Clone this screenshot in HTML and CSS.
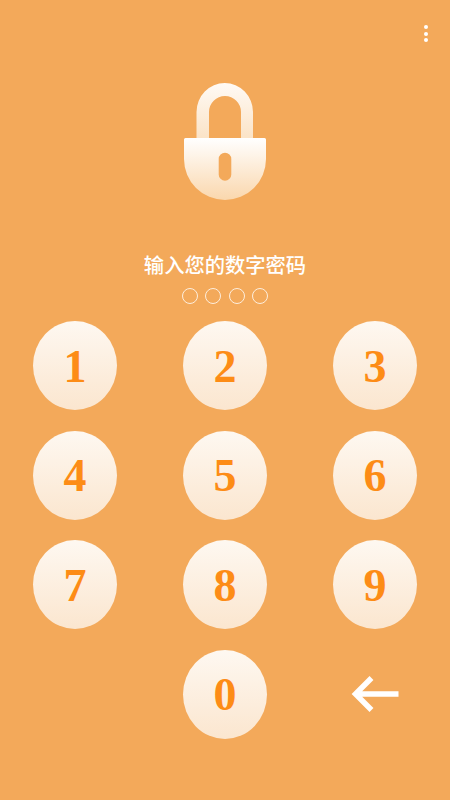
FILE: index.html
```html
<!DOCTYPE html>
<html lang="zh-CN">
  <head>
    <meta charset="UTF-8" />
    <meta name="viewport" content="width=device-width, initial-scale=1.0" />
    <title>输入您的数字密码</title>
    <link rel="stylesheet" href="styles.css">
  </head>
  <body>
    <div class="screen">
      <div class="top-bar">
        <div class="menu">
          <span class="menu-dot"></span>
          <span class="menu-dot"></span>
          <span class="menu-dot"></span>
        </div>
      </div>

      <svg class="lock" width="82" height="118" viewBox="0 0 82 118">
        <defs>
          <linearGradient id="shackleFill" x1="0" y1="0" x2="0" y2="1">
            <stop offset="0" stop-color="#fffaf5" />
            <stop offset="1" stop-color="#fbe3c6" />
          </linearGradient>
          <linearGradient id="bodyFill" x1="0" y1="0" x2="0" y2="1">
            <stop offset="0" stop-color="#ffffff" />
            <stop offset="1" stop-color="#fad7ad" />
          </linearGradient>
        </defs>
        <path d="M12.500 56V29a28.250 29 0 0 1 56.500 0V56H57V29a16 16 0 0 0-32 0V56Z" fill="url(#shackleFill)" />
        <path fill-rule="evenodd" d="M1.500 55H80.500a1.500 1.500 0 0 1 1.500 1.500V76a41 41 0 0 1-82 0V56.500A1.500 1.500 0 0 1 1.500 55ZM41 69.700a6.300 6.300 0 0 0-6.300 6.300V91.400a6.300 6.300 0 0 0 12.600 0V76a6.300 6.300 0 0 0-6.300-6.300Z" fill="url(#bodyFill)" />
      </svg>

      <h1 class="title">输入您的数字密码</h1>

      <div class="pin-dots">
        <span class="pin-dot"></span>
        <span class="pin-dot"></span>
        <span class="pin-dot"></span>
        <span class="pin-dot"></span>
      </div>

      <div class="keypad">
        <button class="key">1</button>
        <button class="key">2</button>
        <button class="key">3</button>
        <button class="key">4</button>
        <button class="key">5</button>
        <button class="key">6</button>
        <button class="key">7</button>
        <button class="key">8</button>
        <button class="key">9</button>
        <span></span>
        <button class="key">0</button>
        <button class="back">
          <svg width="50" height="38" viewBox="0 0 50 38">
            <path d="M48.500 19H5.500M21.500 3 5.500 19 21.500 35" fill="none" stroke="#ffffff" stroke-width="5.500" />
          </svg>
        </button>
      </div>
    </div>
  </body>
</html>
```

FILE: styles.css
```css
* {
  box-sizing: border-box;
  margin: 0;
  padding: 0;
}

body {
  width: 450px;
  height: 800px;
  overflow: hidden;
  background-color: #f3a95a;
  font-family: "Noto Sans CJK SC", "Liberation Sans", sans-serif;
}

.screen {
  display: flex;
  flex-direction: column;
  align-items: center;
  height: 800px;
}

.top-bar {
  display: flex;
  justify-content: flex-end;
  width: 100%;
  height: 83px;
  padding: 25px 22px 0 0;
}

.menu {
  display: flex;
  flex-direction: column;
  gap: 2.500px;
}

.menu-dot {
  width: 4px;
  height: 4px;
  border-radius: 50%;
  background-color: #ffffff;
}

.lock {
  display: block;
}

.title {
  margin-top: 49px;
  color: #ffffff;
  font-size: 20.300px;
  font-weight: 500;
  line-height: 28px;
}

.pin-dots {
  display: flex;
  gap: 7.500px;
  margin-top: 10px;
}

.pin-dot {
  width: 16px;
  height: 16px;
  border: 1.600px solid #fdeedd;
  border-radius: 50%;
}

.keypad {
  display: grid;
  grid-template-columns: repeat(3, 84px);
  grid-auto-rows: 89px;
  justify-content: space-between;
  row-gap: 20.500px;
  width: 100%;
  margin-top: 17px;
  padding: 0 33px;
}

.key {
  padding-top: 2px;
  border: none;
  border-radius: 50%;
  background: linear-gradient(180deg, #fef8f1, #fbe6cf);
  color: #fd8c16;
  font-family: "Liberation Serif", serif;
  font-size: 46px;
  font-weight: 700;
  line-height: 1;
}

.back {
  display: flex;
  justify-content: center;
  align-items: center;
  border: none;
  background: none;
}
```
